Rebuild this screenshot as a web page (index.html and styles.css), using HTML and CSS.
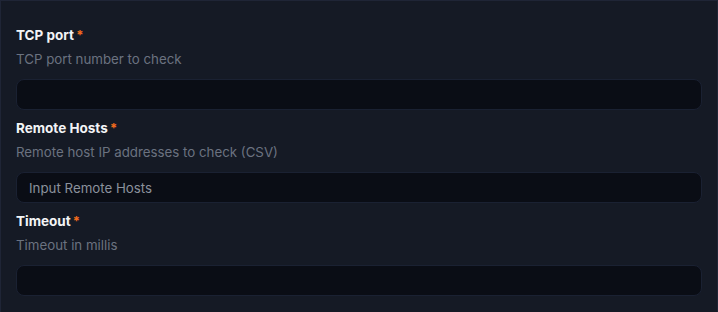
FILE: index.html
```html
<!DOCTYPE html>
<html lang="en">
<head>
    <meta charset="UTF-8">
    <meta name="viewport" content="width=device-width, initial-scale=1.0">
    <title>Check settings</title>
    <link rel="stylesheet" href="styles.css">
</head>
<body>
    <div class="panel">
        <div class="field">
            <label class="field-label" for="tcp-port">TCP port <span class="required">*</span></label>
            <p class="field-desc">TCP port number to check</p>
            <input class="field-input" id="tcp-port" type="text">
        </div>

        <div class="field">
            <label class="field-label" for="remote-hosts">Remote Hosts <span class="required">*</span></label>
            <p class="field-desc">Remote host IP addresses to check (CSV)</p>
            <input class="field-input" id="remote-hosts" type="text" placeholder="Input Remote Hosts">
        </div>

        <div class="field">
            <label class="field-label" for="timeout">Timeout <span class="required">*</span></label>
            <p class="field-desc">Timeout in millis</p>
            <input class="field-input" id="timeout" type="text">
        </div>
    </div>
</body>
</html>
```

FILE: styles.css
```css
body {
    margin: 0;
    background-color: #151a25;
    font-family: Inter, "Noto Sans", sans-serif;
    font-size: 13.3px;
    overflow: hidden;
}

.panel {
    height: 312px;
    box-sizing: border-box;
    padding: 24px 15px 0;
    border: 1px solid #1f2536;
    border-bottom: none;
    display: flex;
    flex-direction: column;
    gap: 8px;
}

.field {
    display: flex;
    flex-direction: column;
}

.field-label {
    display: block;
    color: #f3f4f6;
    font-size: 13.5px;
    font-weight: 700;
    line-height: 20px;
}

.required {
    color: #f26b1d;
    font-size: 13px;
    margin-left: -1px;
}

.field-desc {
    margin: 4px 0 10px;
    color: #6b7280;
    line-height: 20px;
}

.field-input {
    height: 31px;
    box-sizing: border-box;
    padding: 0 12px;
    border: 1px solid #1a2132;
    border-radius: 8px;
    background-color: #0a0d15;
    color: #d1d5db;
    font-family: inherit;
    font-size: 13.3px;
    outline: none;
}

.field-input::placeholder {
    color: #8b919c;
}
```
